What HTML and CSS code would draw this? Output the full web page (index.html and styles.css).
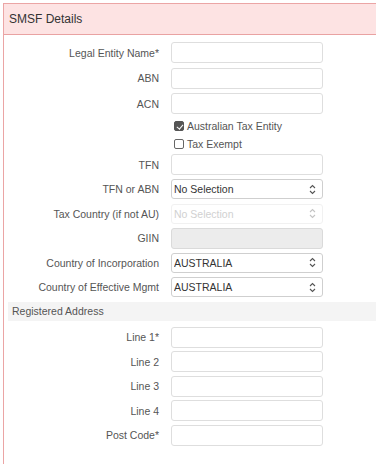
FILE: index.html
```html
<!DOCTYPE html>
<html lang="en">
<head>
  <meta charset="UTF-8" />
  <meta name="viewport" content="width=device-width, initial-scale=1" />
  <title>SMSF Details</title>
  <link rel="stylesheet" href="styles.css">
</head>
<body>

  <div class="panel">
    <div class="panel-heading">SMSF Details</div>

    <div class="panel-body">
      <div class="group top-group">
        <div class="row">
          <label class="label" for="legal-name">Legal Entity Name*</label>
          <input class="field" id="legal-name" type="text" />
        </div>
        <div class="row">
          <label class="label" for="abn">ABN</label>
          <input class="field" id="abn" type="text" />
        </div>
        <div class="row">
          <label class="label" for="acn">ACN</label>
          <input class="field" id="acn" type="text" />
        </div>
      </div>

      <div class="checks">
        <label class="check">
          <input type="checkbox" checked />
          <span>Australian Tax Entity</span>
        </label>
        <label class="check">
          <input type="checkbox" />
          <span>Tax Exempt</span>
        </label>
      </div>

      <div class="group">
        <div class="row">
          <label class="label" for="tfn">TFN</label>
          <input class="field" id="tfn" type="text" />
        </div>
        <div class="row">
          <label class="label" for="tfn-abn">TFN or ABN</label>
          <span class="select-wrap">
            <select class="field select" id="tfn-abn">
              <option>No Selection</option>
            </select>
            <svg class="arrows" width="7" height="11" viewBox="0 0 7 11"><path d="M1 4 L3.5 1.5 L6 4 M1 7 L3.5 9.5 L6 7" fill="none" stroke="currentColor" stroke-width="1.1"/></svg>
          </span>
        </div>
        <div class="row">
          <label class="label" for="tax-country">Tax Country (if not AU)</label>
          <span class="select-wrap disabled">
            <select class="field select" id="tax-country" disabled>
              <option>No Selection</option>
            </select>
            <svg class="arrows" width="7" height="11" viewBox="0 0 7 11"><path d="M1 4 L3.5 1.5 L6 4 M1 7 L3.5 9.5 L6 7" fill="none" stroke="currentColor" stroke-width="1.1"/></svg>
          </span>
        </div>
        <div class="row">
          <label class="label" for="giin">GIIN</label>
          <input class="field" id="giin" type="text" disabled />
        </div>
        <div class="row">
          <label class="label" for="country-inc">Country of Incorporation</label>
          <span class="select-wrap">
            <select class="field select" id="country-inc">
              <option>AUSTRALIA</option>
            </select>
            <svg class="arrows" width="7" height="11" viewBox="0 0 7 11"><path d="M1 4 L3.5 1.5 L6 4 M1 7 L3.5 9.5 L6 7" fill="none" stroke="currentColor" stroke-width="1.1"/></svg>
          </span>
        </div>
        <div class="row">
          <label class="label" for="country-mgmt">Country of Effective Mgmt</label>
          <span class="select-wrap">
            <select class="field select" id="country-mgmt">
              <option>AUSTRALIA</option>
            </select>
            <svg class="arrows" width="7" height="11" viewBox="0 0 7 11"><path d="M1 4 L3.5 1.5 L6 4 M1 7 L3.5 9.5 L6 7" fill="none" stroke="currentColor" stroke-width="1.1"/></svg>
          </span>
        </div>
      </div>

      <div class="section-title">Registered Address</div>

      <div class="group">
        <div class="row">
          <label class="label" for="line1">Line 1*</label>
          <input class="field" id="line1" type="text" />
        </div>
        <div class="row">
          <label class="label" for="line2">Line 2</label>
          <input class="field" id="line2" type="text" />
        </div>
        <div class="row">
          <label class="label" for="line3">Line 3</label>
          <input class="field" id="line3" type="text" />
        </div>
        <div class="row">
          <label class="label" for="line4">Line 4</label>
          <input class="field" id="line4" type="text" />
        </div>
        <div class="row">
          <label class="label" for="postcode">Post Code*</label>
          <input class="field" id="postcode" type="text" />
        </div>
      </div>
    </div>
  </div>

</body>
</html>
```

FILE: styles.css
```css
body {
  margin: 0;
  height: 100vh;
  font-family: "Liberation Sans", Arial, sans-serif;
  font-size: 10.5px;
  color: #555;
  background: #fff;
  overflow: hidden;
}
.panel {
  box-sizing: border-box;
  margin: 3px 0 0 3px;
  height: calc(100% - 3px);
  border-left: 1px solid #eba5a5;
  border-top: 1px solid #eba5a5;
}
.panel-heading {
  height: 30px;
  line-height: 31px;
  padding-left: 5px;
  font-size: 12px;
  color: #333;
  background: #fde3e3;
  border-bottom: 1px solid #e9a2a2;
}
.panel-body {
  padding-top: 7px;
}
.group {
  display: flex;
  flex-direction: column;
  gap: 3.5px;
}
.top-group {
  gap: 4.5px;
}
.row {
  display: flex;
  align-items: center;
  height: 21px;
}
.label {
  width: 155px;
  margin-right: 12px;
  text-align: right;
  white-space: nowrap;
}
.field {
  box-sizing: border-box;
  width: 152px;
  height: 21px;
  margin: 0;
  padding: 0 3px;
  border: 1px solid #dedede;
  border-radius: 3px;
  background: #fff;
  font-family: inherit;
  font-size: 10.5px;
  color: #333;
  outline: none;
}
.field:disabled {
  background: #ececec;
  border-color: #dadada;
}
.select-wrap {
  position: relative;
  display: block;
  width: 152px;
  height: 20px;
  color: #555;
}
.select {
  display: block;
  height: 20px;
  appearance: none;
  -webkit-appearance: none;
  border-color: #cfcfcf;
  padding-left: 2px;
}
.select-wrap .arrows {
  position: absolute;
  right: 7px;
  top: 4.5px;
}
.select-wrap.disabled {
  color: #c4c4c4;
}
.select-wrap.disabled .select {
  background: #fff;
  color: #bdbdbd;
  border-color: #ececec;
}
.checks {
  margin: 3.5px 0 1.5px 167px;
}
.check {
  display: flex;
  align-items: center;
  height: 17.5px;
  gap: 3px;
  padding-left: 3px;
  color: #555;
}
.check input {
  appearance: none;
  -webkit-appearance: none;
  box-sizing: border-box;
  width: 10px;
  height: 10px;
  margin: 0;
  border: 1px solid #666;
  border-radius: 2px;
  background: #fff;
  position: relative;
}
.check input:checked {
  background: #555;
  border-color: #555;
}
.check input:checked::after {
  content: "";
  position: absolute;
  left: 2.5px;
  top: 0.5px;
  width: 2.5px;
  height: 5px;
  border: solid #fff;
  border-width: 0 1.5px 1.5px 0;
  transform: rotate(40deg);
}
.section-title {
  height: 19px;
  line-height: 19px;
  margin: 4.5px 0 5.5px 4px;
  padding-left: 4px;
  background: #f4f4f4;
  color: #555;
}
```
